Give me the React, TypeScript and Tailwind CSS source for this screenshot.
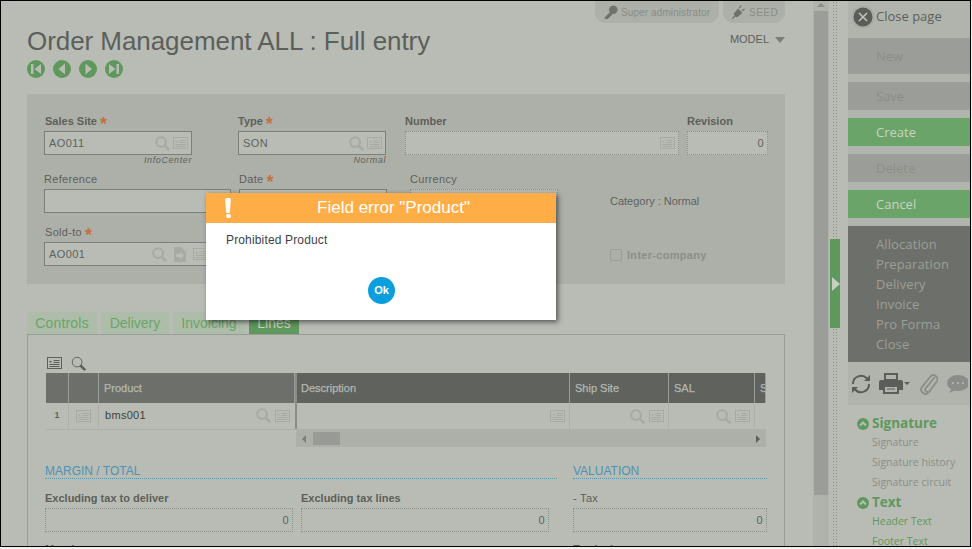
import React from 'react';
import type { FC, ReactNode } from 'react';

const FONT = "font-['Liberation_Sans',Arial,sans-serif]";
const SIDE_FONT = "font-['Open_Sans',sans-serif]";

const IconDetail: FC<{ className?: string; color?: string }> = ({ className = '', color = '#a7aaa3' }) => (
  <svg viewBox="0 0 15 12" width="15" height="12" className={`shrink-0 ${className}`} fill="none">
    <rect x="0.5" y="0.5" width="14" height="11" stroke={color} />
    <path d="M2 4h3L3.5 6z" fill={color} />
    <path d="M6.5 3.5h6M6.5 5.5h6M2.5 7.5h10M2.5 9.5h10" stroke={color} />
  </svg>
);

const IconSearch: FC<{ className?: string; color?: string; thin?: boolean }> = ({
  className = '',
  color = '#a7aaa3',
  thin,
}) => (
  <svg viewBox="0 0 16 16" width="15" height="15" className={`shrink-0 ${className}`} fill="none">
    <circle cx="6.5" cy="6.5" r="5.2" stroke={color} strokeWidth={thin ? 1 : 2.2} />
    <path d="M10.8 10.8l3.5 3.5" stroke={color} strokeWidth="2.8" strokeLinecap="round" />
  </svg>
);

const IconDocArrow: FC = () => (
  <svg viewBox="0 0 12 15" width="12" height="15" className="shrink-0">
    <path d="M0 0h7l5 5v10H0z" fill="#a7aaa3" />
    <path d="M2 7h4V4.5L10 8.5l-4 4V10H2z" fill="#b8bcb5" />
  </svg>
);

const Field: FC<{ width: string; value?: string; children?: ReactNode; right?: boolean; dotted?: boolean }> = ({
  width,
  value,
  children,
  right,
  dotted,
}) => (
  <div
    className={`flex h-6 items-center gap-[3px] bg-[#b8bcb5] pl-[4px] pr-[3px] text-[11px] tracking-[0.4px] text-[#5f625d] ${width} ${
      dotted ? 'border border-dotted border-[#8e918b]' : 'border border-[#7d807a]'
    }`}
  >
    <span className={`flex-1 ${right ? 'text-right' : ''}`}>{value}</span>
    {children}
  </div>
);

const Label: FC<{ text: string; required?: boolean; className?: string }> = ({ text, required, className = '' }) => (
  <div className={`flex h-[18px] items-center pb-[2px] text-[11px] leading-none text-[#5e5f59] ${className}`}>
    {text}
    {required && <span className="ml-[3px] mt-[5px] text-[18px] font-bold leading-none text-[#c4703f]">*</span>}
  </div>
);

const BOLD = 'font-bold';
const SOFT = 'tracking-[0.3px]';

const NavButton: FC<{ path: string }> = ({ path }) => (
  <svg viewBox="0 0 18 18" width="18" height="18">
    <circle cx="9" cy="9" r="9" fill="#5f985c" />
    <path d={path} fill="#b8bcb5" />
  </svg>
);

const SideButton: FC<{ text: string; active?: boolean; tall?: boolean }> = ({ text, active, tall }) => (
  <div
    className={`flex items-center pl-[28px] pt-[1px] text-[13px] ${tall ? 'h-9' : 'h-7'} ${
      active ? 'bg-[#6ba468] text-[#c9d2c4]' : 'bg-[#9b9e98] text-[#8b8e88]'
    }`}
  >
    {text}
  </div>
);

const SideSection: FC<{ title: string; items: string[]; green?: boolean }> = ({ title, items, green }) => (
  <div>
    <div className="flex h-[19px] items-center gap-[3px]">
      <svg viewBox="0 0 12 12" width="12" height="12">
        <circle cx="6" cy="6" r="6" fill="#5f985c" />
        <path d="M3 7.5L6 4.5L9 7.5" stroke="#b8bcb5" strokeWidth="2" fill="none" />
      </svg>
      <span className="text-[13.5px] font-bold leading-none text-[#5f985c]">{title}</span>
    </div>
    {items.map((item) => (
      <div
        key={item}
        className={`ml-[15px] flex h-[20px] items-center text-[10.5px] ${green ? 'text-[#5f985c]' : 'text-[#8b8e88]'}`}
      >
        {item}
      </div>
    ))}
  </div>
);

const Th: FC<{ width: string; text?: string; dark?: boolean; className?: string }> = ({
  width,
  text,
  dark,
  className = 'pl-[5px]',
}) => (
  <div
    className={`flex h-full shrink-0 items-center overflow-hidden whitespace-nowrap border-r border-[#9a9d97] text-[11px] text-[#b4b8b1] [-webkit-text-stroke:0.25px_#b4b8b1] ${width} ${className} ${
      dark ? 'bg-[#5f625d]' : 'bg-[#6d706a]'
    }`}
  >
    {text}
  </div>
);

const Td: FC<{ width: string; children?: ReactNode; className?: string }> = ({ width, children, className = '' }) => (
  <div className={`flex h-full shrink-0 items-center gap-[4px] border-r border-[#adb0a9] ${width} ${className}`}>
    {children}
  </div>
);

export default function App() {
  return (
    <div className={`relative h-[549px] w-[972px] overflow-hidden bg-[#f0f0f0] ${FONT}`}>
      <div className="flex h-[547px] w-[971px] overflow-hidden border border-black bg-[#b8bcb5]">
        {/* Main page */}
        <div className="w-[812px] shrink-0 pl-[26px] pr-[28px]">
          <div className="flex h-[22px] justify-end gap-[4px]">
            <div className="flex h-[22px] w-[124px] items-center gap-[3px] rounded-b-[11px] bg-[#adb0a9] pl-[8px] text-[10px] tracking-[0.1px] text-[#8a8d87]">
              <svg viewBox="0 0 16 16" width="15" height="15">
                <circle cx="11" cy="5" r="4.5" fill="#6f726c" />
                <path d="M8 7L2 13v2h3l5-5z" fill="#6f726c" />
              </svg>
              Super administrator
            </div>
            <div className="flex h-[22px] w-[62px] items-center gap-[4px] rounded-b-[11px] bg-[#adb0a9] pl-[8px] text-[10px] tracking-[0.5px] text-[#8a8d87]">
              <svg viewBox="0 0 16 16" width="14" height="14">
                <path d="M1 15l3-3-1-2 5-6 5 5-6 5-2-1-3 3zM9 3l2-3 1 1-2 3zM12 6l3-2 1 1-3 2z" fill="#6f726c" />
              </svg>
              SEED
            </div>
          </div>
          <div className="flex h-[30px] items-start justify-between">
            <div className="mt-[3px] whitespace-nowrap text-[26px] leading-[30px] tracking-[-0.06px] text-[#5c5f5a]">
              Order Management ALL : Full entry
            </div>
            <div className="mt-[11px] flex items-center gap-[6px] text-[11px] leading-none text-[#5c5f5a]">
              MODEL
              <span className="h-0 w-0 border-x-[5px] border-t-[6px] border-x-transparent border-t-[#7b7e78]" />
            </div>
          </div>
          <div className="mt-[7px] flex h-[18px] gap-[8px]">
            <NavButton path="M4 4h2.5v10H4zM14 4v10L7.5 9z" />
            <NavButton path="M12 3.5v11L5.5 9z" />
            <NavButton path="M6.5 3.5v11L13 9z" />
            <NavButton path="M11.5 4H14v10h-2.5zM4 4v10l6.5-5z" />
          </div>

          {/* Header form */}
          <div className="mt-[16px] h-[190px] bg-[#adb0a9] pl-[17px] pt-[19px]">
            <div className="flex h-[58px]">
              <div className="w-[194px]">
                <Label text="Sales Site" required className={`ml-[1px] ${BOLD}`} />
                <Field width="w-[148px]" value="AO011">
                  <IconSearch />
                  <IconDetail />
                </Field>
                <div className="w-[148px] text-right text-[9px] italic leading-[10px] tracking-[0.6px] text-[#5f625d]">InfoCenter</div>
              </div>
              <div className="w-[167px]">
                <Label text="Type" required className={BOLD} />
                <Field width="w-[148px]" value="SON">
                  <IconSearch />
                  <IconDetail />
                </Field>
                <div className="w-[148px] text-right text-[9px] italic leading-[10px] tracking-[0.6px] text-[#5f625d]">Normal</div>
              </div>
              <div className="w-[282px]">
                <Label text="Number" className={BOLD} />
                <Field width="w-[274px]" dotted>
                  <IconDetail />
                </Field>
              </div>
              <div>
                <Label text="Revision" className={BOLD} />
                <Field width="w-[81px]" value="0" right dotted />
              </div>
            </div>
            <div className="flex h-[53px]">
              <div className="w-[195px]">
                <Label text="Reference" className={SOFT} />
                <Field width="w-[187px]" />
              </div>
              <div className="w-[171px]">
                <Label text="Date" required className={SOFT} />
                <Field width="w-[148px]" />
              </div>
              <div className="w-[200px]">
                <Label text="Currency" className={SOFT} />
                <Field width="w-[148px]" dotted />
              </div>
              <div className="mt-[22px] text-[11px] text-[#5f625d]">Category : Normal</div>
            </div>
            <div className="flex">
              <div className="w-[566px]">
                <Label text="Sold-to" required className={`ml-[1px] ${SOFT}`} />
                <Field width="w-[187px]" value="AO001">
                  <IconSearch />
                  <span className="ml-[4px]">
                    <IconDocArrow />
                  </span>
                  <IconDetail className="ml-[4px] mr-[19px]" />
                </Field>
              </div>
              <div className="mt-[24px] flex h-[14px] items-center gap-[5px] text-[11px] font-bold tracking-[0.3px] text-[#8b8e88]">
                <span className="h-[12px] w-[12px] rounded-[2px] border border-[#9b9e98]" />
                Inter-company
              </div>
            </div>
          </div>

          {/* Tabs */}
          <div className="mt-[28px] flex h-[22px] items-end gap-[4px]">
            <div className="flex h-[22px] w-[70px] items-center justify-center bg-[#adbdaa] text-[14px] tracking-[0.2px] text-[#6ba468]">Controls</div>
            <div className="flex h-[22px] w-[68px] items-center justify-center bg-[#adbdaa] text-[14px] text-[#6ba468]">Delivery</div>
            <div className="flex h-[22px] w-[72px] items-center justify-center bg-[#adbdaa] text-[14px] text-[#6ba468]">Invoicing</div>
            <div className="flex h-[22px] w-[50px] items-center justify-center bg-[#5f985c] text-[14px] text-[#c9d2c4]">Lines</div>
          </div>
          <div className="h-[300px] border border-[#9a9d97] pl-[18px] pr-[18px]">
            <div className="flex h-[38px] items-end gap-[9px] pb-[2px] pl-[1px]">
              <IconDetail color="#5c5f5a" className="mb-[2px]" />
              <IconSearch color="#5c5f5a" thin />
            </div>
            <div className="flex h-[30px] w-[720px]">
              <Th width="w-[23px]" />
              <Th width="w-[30px]" />
              <Th width="w-[196px]" text="Product" />
              <div className="w-[2px] bg-[#8a8d87]" />
              <Th width="w-[273px]" text="Description" dark className="pl-[4px]" />
              <Th width="w-[99px]" text="Ship Site" dark />
              <Th width="w-[86px]" text="SAL" dark />
              <Th width="w-[11px]" text="S" dark />
            </div>
            <div className="flex h-[27px] w-[720px] border-b border-[#adb0a9]">
              <Td width="w-[23px]" className="justify-center text-[9px] font-bold text-[#5f625d]">1</Td>
              <Td width="w-[30px]" className="justify-center">
                <IconDetail />
              </Td>
              <Td width="w-[196px]" className="border-r-0 pb-[1px] pl-[6px] pr-[5px] text-[11px] tracking-[0.3px] text-[#3f413d]">
                <span className="flex-1">bms001</span>
                <IconSearch />
                <IconDetail />
              </Td>
              <div className="w-[2px] bg-[#8a8d87]" />
              <Td width="w-[273px]" className="justify-end pr-[4px]">
                <IconDetail />
              </Td>
              <Td width="w-[99px]" className="justify-end pr-[4px]">
                <IconSearch />
                <IconDetail />
              </Td>
              <Td width="w-[86px]" className="justify-end pr-[4px]">
                <IconSearch />
                <IconDetail />
              </Td>
            </div>
            <div className="ml-[250px] flex h-[17px] w-[470px] items-center bg-[#adb0a9] pl-[6px] pr-[6px]">
              <span className="h-0 w-0 border-y-[4px] border-r-[4px] border-y-transparent border-r-[#7b7e78]" />
              <span className="ml-[7px] h-[13px] w-[27px] bg-[#989b95]" />
              <span className="ml-auto h-0 w-0 border-y-[4px] border-l-[4px] border-y-transparent border-l-[#5c5f5a]" />
            </div>

            <div className="-ml-[1px] mt-[16px] flex w-[740px]">
              <div className="w-[528px] shrink-0 pr-[16px]">
                <div className="h-[16px] border-b border-dotted border-[#4c9cb8] text-[12px] leading-[17px] text-[#4c93b4]">MARGIN / TOTAL</div>
                <div className="mt-[11px] flex gap-[8px]">
                  <div>
                    <Label text="Excluding tax to deliver" className={BOLD} />
                    <Field width="w-[248px]" value="0" right dotted />
                  </div>
                  <div>
                    <Label text="Excluding tax lines" className={BOLD} />
                    <Field width="w-[248px]" value="0" right dotted />
                  </div>
                </div>
              </div>
              <div className="w-[194px] shrink-0">
                <div className="h-[16px] border-b border-dotted border-[#4c9cb8] text-[12px] leading-[17px] text-[#4c93b4]">VALUATION</div>
                <div className="mt-[11px]">
                  <Label text="- Tax" className={SOFT} />
                  <Field width="w-[194px]" value="0" right dotted />
                </div>
              </div>
            </div>
            <div className="-ml-[1px] mt-[9px] flex h-[18px] w-[740px]">
              <Label text="Margin" className={`w-[528px] ${BOLD}`} />
              <Label text="Tax incl" className={BOLD} />
            </div>
          </div>
        </div>

        {/* Scrollbar */}
        <div className="flex w-[16px] shrink-0 flex-col bg-[#b0b3ac] px-[1px]">
          <div className="mx-auto mt-[2px] h-0 w-0 border-x-[4px] border-b-[4px] border-x-transparent border-b-[#8b8e88]" />
          <div className="mt-[4px] h-[484px] w-full bg-[#9b9e98]" />
        </div>

        {/* Splitter */}
        <div className="ml-[1px] flex w-[10px] shrink-0 flex-col items-center">
          <div className="h-[238px] w-[6px] bg-[radial-gradient(#8b8e88_1px,transparent_1px)] bg-[length:3px_3px]" />
          <div className="relative h-[90px] w-[10px] bg-[#5f985c]">
            <span className="absolute left-[2px] top-[38px] h-0 w-0 border-y-[7px] border-l-[8px] border-y-transparent border-l-[#c3cfbf]" />
          </div>
          <div className="h-[218px] w-[6px] bg-[radial-gradient(#8b8e88_1px,transparent_1px)] bg-[length:3px_3px]" />
        </div>

        {/* Right panel */}
        <div className={`ml-[8px] flex-1 overflow-hidden bg-[#b1b4ad] ${SIDE_FONT}`}>
          <div className="flex h-[37px] items-center gap-[4px] pb-[5px] pl-[3px]">
            <svg viewBox="0 0 24 24" width="24" height="24">
              <circle cx="12" cy="12" r="11.5" fill="#a9aca5" />
              <circle cx="12" cy="12" r="9.5" fill="#5a5d58" />
              <path d="M8 8l8 8M16 8l-8 8" stroke="#c3c7c0" strokeWidth="1.5" />
            </svg>
            <span className="-ml-[3px] text-[13px] text-[#5c5f5a]">Close page</span>
          </div>
          <div className="flex flex-col gap-[8px]">
            <SideButton text="New" tall />
            <SideButton text="Save" />
            <SideButton text="Create" active />
            <SideButton text="Delete" />
            <SideButton text="Cancel" active />
          </div>
          <div className="mt-[8px] flex h-[136px] flex-col justify-center bg-[#6d706a] pl-[28px] text-[13px] leading-[20px] tracking-[0.1px] text-[#9b9e98]">
            <div>Allocation</div>
            <div>Preparation</div>
            <div>Delivery</div>
            <div>Invoice</div>
            <div>Pro Forma</div>
            <div>Close</div>
          </div>
          <div className="flex h-[43px] items-center pl-[2px]">
            <svg viewBox="0 0 22 22" width="22" height="22" fill="none">
              <path d="M3 11a8 8 0 0 1 14-5.5M19 11a8 8 0 0 1-14 5.5" stroke="#5a5d58" strokeWidth="2" />
              <path d="M20 2v6h-6zM2 20v-6h6z" fill="#5a5d58" />
            </svg>
            <svg viewBox="0 0 24 22" width="24" height="22" className="ml-[7px]">
              <path d="M6 1h12v6H6z" fill="none" stroke="#5a5d58" strokeWidth="2" />
              <path d="M2 7h20a2 2 0 0 1 2 2v8h-4v4H4v-4H0V9a2 2 0 0 1 2-2z" fill="#5a5d58" />
              <path d="M6 14h12v5H6z" fill="#b1b4ad" />
              <path d="M8 16h8" stroke="#5a5d58" />
            </svg>
            <span className="ml-[1px] h-0 w-0 border-x-[3px] border-t-[3px] border-x-transparent border-t-[#5a5d58]" />
            <svg viewBox="0 0 20 24" width="20" height="24" className="ml-[8px]" fill="none">
              <path d="M17 5L7 17a3 3 0 0 0 4 3l8-11a4 4 0 0 0-6-5L4 15c-3 4 2 9 6 6" stroke="#8b8e88" strokeWidth="1.8" />
            </svg>
            <svg viewBox="0 0 22 18" width="22" height="18" className="ml-[8px] shrink-0">
              <ellipse cx="12" cy="8" rx="11" ry="8" fill="#8b8e88" />
              <path d="M6 13l-3 5 7-3z" fill="#8b8e88" />
              <circle cx="7" cy="8" r="1" fill="#b8bcb5" />
              <circle cx="12" cy="8" r="1" fill="#b8bcb5" />
              <circle cx="17" cy="8" r="1" fill="#b8bcb5" />
            </svg>
          </div>
          <div className="h-[142px] bg-[#b8bcb5] pl-[9px] pt-[9px]">
            <SideSection title="Signature" items={['Signature', 'Signature history', 'Signature circuit']} />
            <SideSection title="Text" items={['Header Text', 'Footer Text']} green />
          </div>
        </div>
      </div>

      {/* Error dialog */}
      <div className="absolute left-[206px] top-[193px] h-[127px] w-[350px] bg-white shadow-[2px_2px_5px_rgba(0,0,0,0.55)]">
        <div className="relative flex h-[30px] items-center justify-center bg-[#ffae47] pl-[25px] text-[17px] text-white">
          <span className="absolute left-[19px] top-[5px] h-[15px] w-[6px] rounded-[2px] bg-white [clip-path:polygon(0_0,100%_0,80%_100%,20%_100%)]" />
          <span className="absolute left-[20px] top-[21px] h-[4px] w-[5px] rounded-full bg-white" />
          Field error "Product"
        </div>
        <div className="pl-[20px] pt-[10px] text-[12px] leading-[14px] tracking-[0.15px] text-[#3f3f46]">Prohibited Product</div>
        <div className="absolute left-[162px] top-[84px] flex h-[27px] w-[27px] items-center justify-center rounded-full bg-[#0a9fdc] text-[11px] font-bold text-white">
          Ok
        </div>
      </div>
    </div>
  );
}
